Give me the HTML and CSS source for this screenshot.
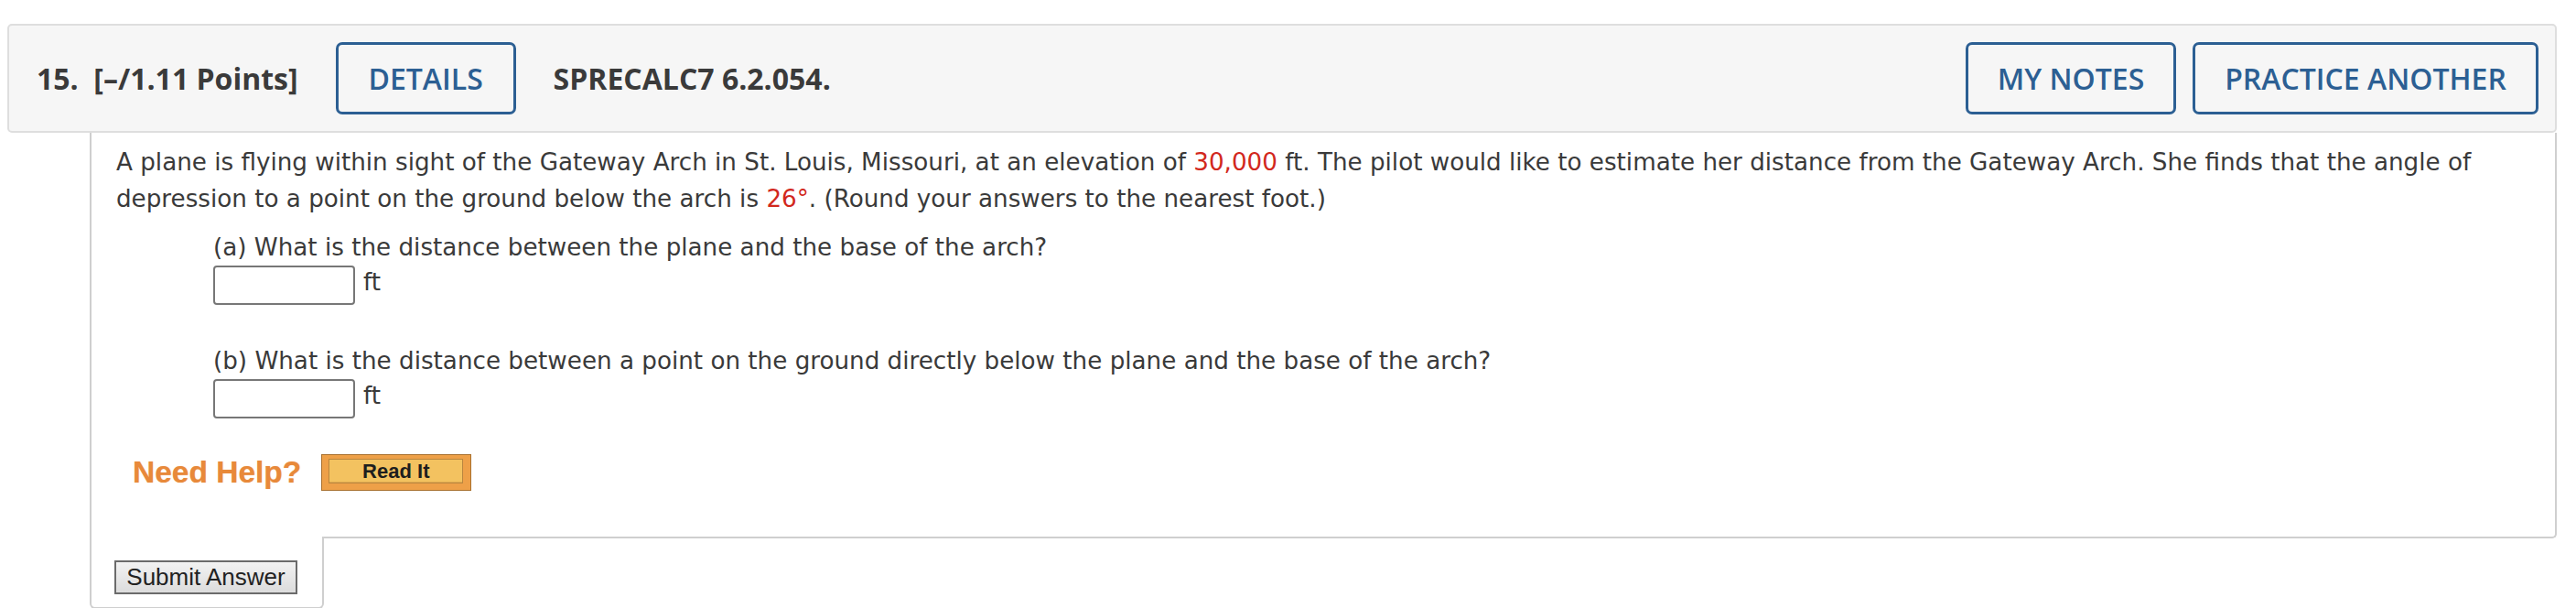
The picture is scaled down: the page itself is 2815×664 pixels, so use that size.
FILE: index.html
```html
<!doctype html>
<html lang="en">
<head>
    <meta charset="UTF-8">
    <title>Question 15 - SPRECALC7 6.2.054</title>
    <link rel="stylesheet" href="styles.css">
</head>
<body>

    <div class="question">

        <div class="q-header">
            <span class="q-points">15.&nbsp; [–/1.11 Points]</span>
            <button class="outline-btn details-btn">DETAILS</button>
            <span class="q-code">SPRECALC7 6.2.054.</span>
            <div class="q-actions">
                <button class="outline-btn notes-btn">MY NOTES</button>
                <button class="outline-btn practice-btn">PRACTICE ANOTHER</button>
            </div>
        </div>

        <div class="q-body">
            <p class="q-text">
                A plane is flying within sight of the Gateway Arch in St. Louis, Missouri, at an elevation of <span class="given">30,000</span> ft. The pilot would like to estimate her distance from the Gateway Arch. She finds that the angle of depression to a point on the ground below the arch is <span class="given">26°</span>. (Round your answers to the nearest foot.)
            </p>

            <div class="part">
                <div>(a) What is the distance between the plane and the base of the arch?</div>
                <div class="answer-row">
                    <input type="text" class="answer-box">
                    <span class="unit">ft</span>
                </div>
            </div>

            <div class="part">
                <div>(b) What is the distance between a point on the ground directly below the plane and the base of the arch?</div>
                <div class="answer-row">
                    <input type="text" class="answer-box">
                    <span class="unit">ft</span>
                </div>
            </div>

            <div class="help-row">
                <span class="need-help">Need Help?</span>
                <button class="read-it"><span>Read It</span></button>
            </div>
        </div>

        <div class="submit-tab">
            <button class="submit-btn">Submit Answer</button>
        </div>
    </div>

</body>
</html>
```

FILE: styles.css
```css
body {
    margin: 0;
    background: #fff;
    color: #3a3a3a;
    font-family: "DejaVu Sans", Verdana, sans-serif;
    font-size: 26.2px;
}
.question {
    margin: 26px 21px 0 8px;
}

/* header bar */
.q-header {
    display: flex;
    align-items: center;
    height: 119px;
    box-sizing: border-box;
    padding: 0 18px 0 30px;
    background: #f6f6f6;
    border: 2px solid #dedede;
    border-radius: 5px;
    font-family: "Open Sans", sans-serif;
}
.q-points {
    font-size: 32px;
    font-weight: 700;
    color: #3a3a3a;
    white-space: pre;
}
.q-code {
    font-size: 32px;
    font-weight: 700;
    color: #3a3a3a;
    margin-left: 41px;
}
.outline-btn {
    height: 79px;
    box-sizing: border-box;
    padding: 0;
    background: transparent;
    border: 3px solid #2c5f93;
    border-radius: 7px;
    color: #2c5f93;
    font-family: "Open Sans", sans-serif;
    font-size: 32px;
    font-weight: 600;
    cursor: pointer;
}
.details-btn {
    width: 197px;
    margin-left: 41px;
}
.notes-btn {
    width: 230px;
}
.practice-btn {
    width: 378px;
}
.q-actions {
    margin-left: auto;
    display: flex;
    gap: 18px;
}

/* question body */
.q-body {
    margin-left: 90px;
    padding: 12px 40px 50px 27px;
    border-left: 2px solid #cfcfcf;
    border-right: 2px solid #cfcfcf;
    border-bottom: 2px solid #cfcfcf;
    border-bottom-right-radius: 5px;
}
.q-text {
    margin: 0;
    line-height: 40px;
}
.given {
    color: #d2281d;
}
.part {
    margin: 13px 0 0 106px;
    line-height: 40px;
}
.part + .part {
    margin-top: 41px;
}
.answer-row {
    display: flex;
    align-items: flex-start;
    gap: 9px;
}
.answer-box {
    width: 155px;
    height: 43px;
    box-sizing: border-box;
    margin: 0;
    border: 2px solid #777;
    border-radius: 4px;
    background: #fff;
}
.unit {
    line-height: 36px;
}

/* help */
.help-row {
    display: flex;
    align-items: center;
    gap: 22px;
    margin: 39px 0 0 18px;
}
.need-help {
    font-family: "Liberation Sans", Arial, sans-serif;
    font-size: 33.5px;
    font-weight: bold;
    color: #e8893a;
    text-shadow: 0 0 1px rgba(232, 137, 58, 0.6);
}
.read-it {
    width: 164px;
    height: 40px;
    box-sizing: border-box;
    padding: 4px 8px 7px 7px;
    background: #eea048;
    border: 1px solid #a8702e;
    cursor: pointer;
}
.read-it span {
    display: flex;
    align-items: center;
    justify-content: center;
    height: 100%;
    box-sizing: border-box;
    background: #f3c260;
    border: 1px solid #b9863f;
    box-shadow: inset 0 -1px 0 #e0a94f;
    font-family: "Liberation Sans", Arial, sans-serif;
    font-size: 22px;
    font-weight: bold;
    color: #1e1e1e;
}

/* submit */
.submit-tab {
    width: 256px;
    box-sizing: border-box;
    margin: -2px 0 0 90px;
    padding: 26px 0 14px 25px;
    background: #fff;
    border-left: 2px solid #cfcfcf;
    border-right: 2px solid #cfcfcf;
    border-bottom: 2px solid #cfcfcf;
    border-radius: 0 0 6px 6px;
}
.submit-btn {
    height: 37px;
    width: 200px;
    padding: 0;
    background: linear-gradient(#f2f2f2, #dcdcdc);
    border: 2px solid #6b6b6b;
    font-family: "Liberation Sans", Arial, sans-serif;
    font-size: 26px;
    color: #222;
    cursor: pointer;
}
```
